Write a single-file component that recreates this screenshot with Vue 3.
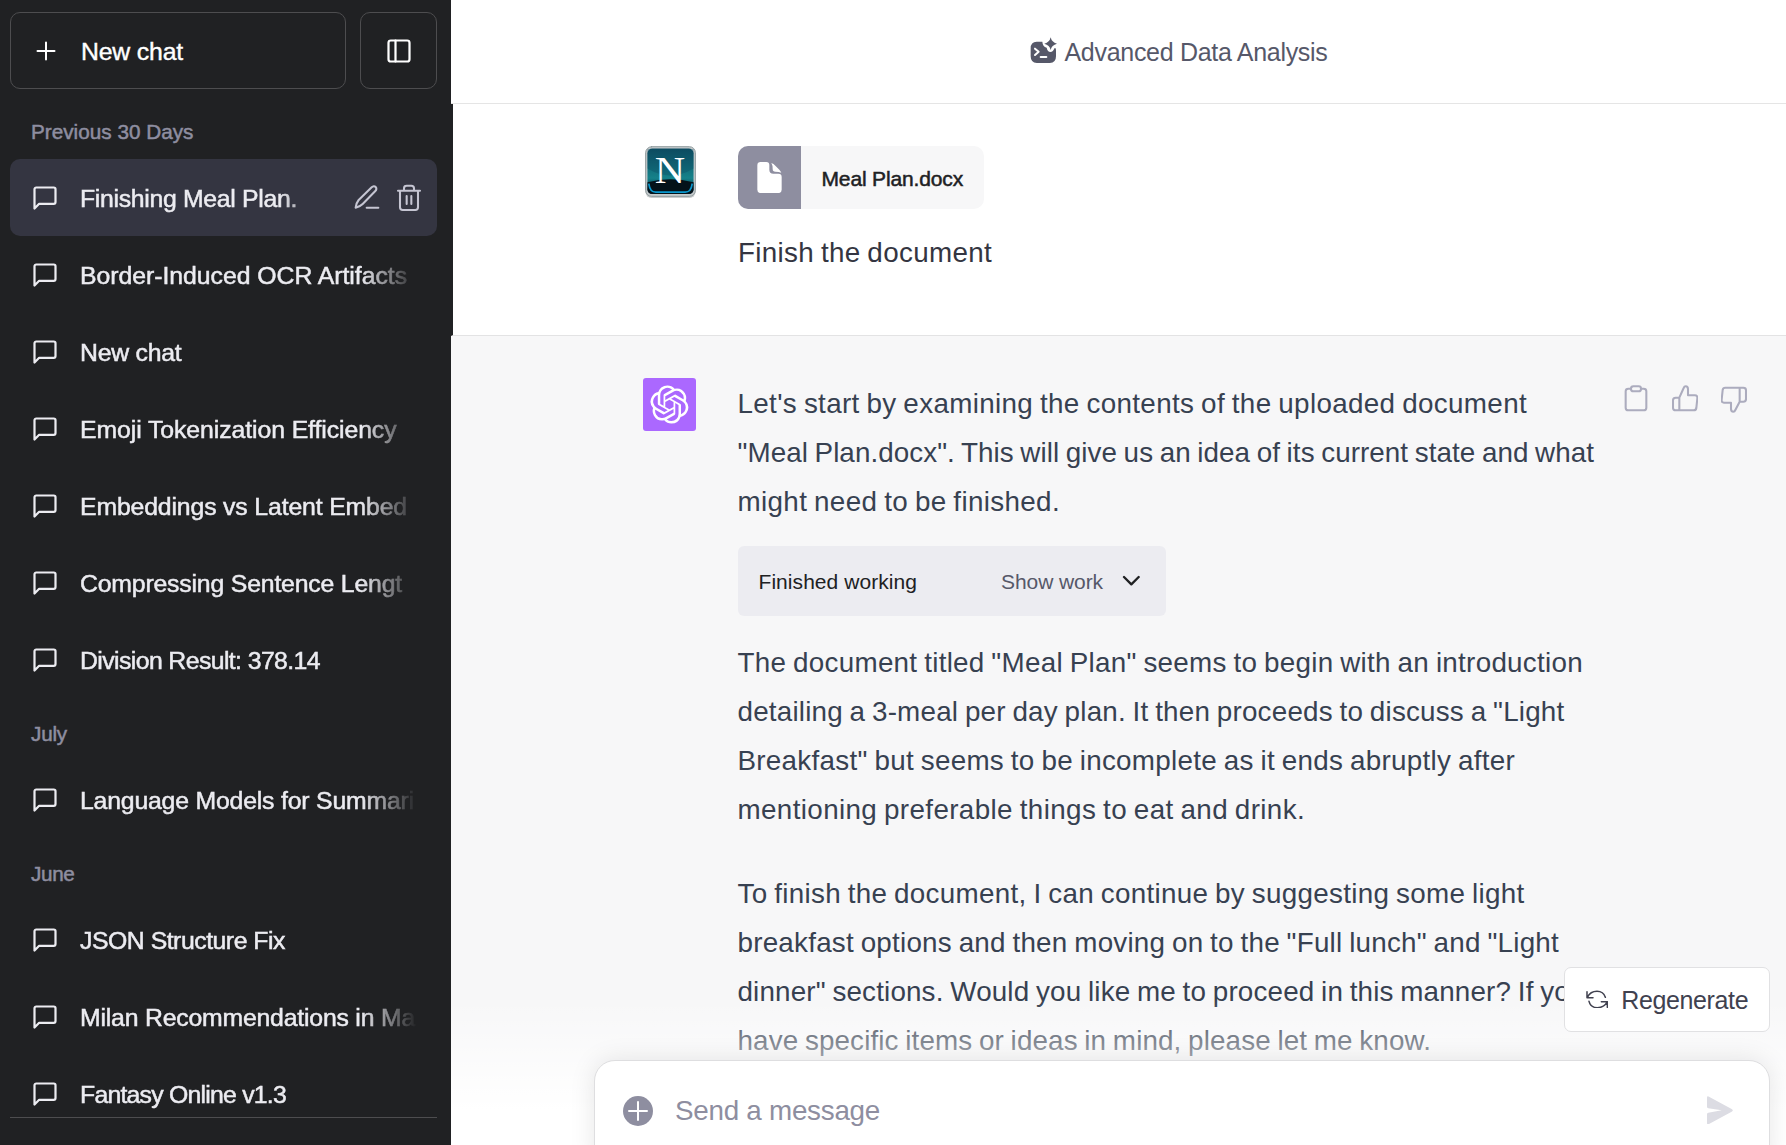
<script setup>
// Tracks a line of text so that it spans the given measure in pixels.
const vFit = {
  mounted(el, { value }) {
    const natural = el.getBoundingClientRect().width
    const count = el.textContent.length
    el.style.letterSpacing = `${((value - natural) / count).toFixed(3)}px`
  },
}

const groups = [
  {
    label: 'Previous 30 Days',
    measure: 162.5,
    chats: [
      { title: 'Finishing Meal Plan.', measure: 217, active: true },
      { title: 'Border-Induced OCR Artifacts', measure: 327 },
      { title: 'New chat', measure: 101.5 },
      { title: 'Emoji Tokenization Efficiency', measure: 316.5 },
      { title: 'Embeddings vs Latent Embed', measure: 327 },
      { title: 'Compressing Sentence Lengt', measure: 322 },
      { title: 'Division Result: 378.14', measure: 240 },
    ],
  },
  {
    label: 'July',
    measure: 36,
    chats: [{ title: 'Language Models for Summari', measure: 334 }],
  },
  {
    label: 'June',
    measure: 43.5,
    chats: [
      { title: 'JSON Structure Fix', measure: 205 },
      { title: 'Milan Recommendations in Ma', measure: 335 },
      { title: 'Fantasy Online v1.3', measure: 206 },
    ],
  },
]

const intro = [
  ["Let's start by examining the contents of the uploaded document", 789.5],
  ['"Meal Plan.docx". This will give us an idea of its current state and what', 856.5],
  ['might need to be finished.', 322.5],
]
const paragraphs = [
  [
    ['The document titled "Meal Plan" seems to begin with an introduction', 845.5],
    ['detailing a 3-meal per day plan. It then proceeds to discuss a "Light', 827],
    ['Breakfast" but seems to be incomplete as it ends abruptly after', 777.5],
    ['mentioning preferable things to eat and drink.', 567.5],
  ],
  [
    ['To finish the document, I can continue by suggesting some light', 787],
    ['breakfast options and then moving on to the "Full lunch" and "Light', 821.5],
    ['dinner" sections. Would you like me to proceed in this manner? If you', 848],
    ['have specific items or ideas in mind, please let me know.', 693.5],
  ],
]
</script>

<template>
  <div class="app">
    <aside class="sidebar">
      <div class="top">
        <button class="new-chat">
          <svg class="plus" viewBox="0 0 24 24"><path d="M12 3.500v17M3.500 12h17" /></svg>
          <span v-fit="102">New chat</span>
        </button>
        <button class="toggle">
          <svg viewBox="0 0 24 24"><rect x="3" y="3" width="18" height="18" rx="2" /><path d="M9 3v18" /></svg>
        </button>
      </div>
      <nav class="history">
        <section v-for="group in groups" :key="group.label">
          <h3><span v-fit="group.measure">{{ group.label }}</span></h3>
          <div v-for="chat in group.chats" :key="chat.title" class="chat" :class="{ active: chat.active }">
            <svg class="bubble" viewBox="0 0 24 24">
              <path d="M21 15.500a1.500 1.500 0 0 1-1.500 1.500H7l-4 4V4.500A1.500 1.500 0 0 1 4.500 3h15A1.500 1.500 0 0 1 21 4.500z" />
            </svg>
            <div class="title"><span v-fit="chat.measure">{{ chat.title }}</span></div>
            <div v-if="chat.active" class="tools">
              <svg viewBox="0 0 78 84">
                <path d="M5 71c1-9 4-17 9-23L53 10c4-4 9-4 12-1s3 8-1 12L26 60c-6 6-13 9-21 11zM38 71h35" />
              </svg>
              <svg viewBox="0 0 78 84">
                <path d="M6 20h66M12 20v50q0 8 8 8h38q8 0 8-8V20M24 19v-6q0-8 8-8h14q8 0 8 8v6M32 36v24M46 36v24" />
              </svg>
            </div>
          </div>
        </section>
      </nav>
      <div class="footer-rule"></div>
    </aside>

    <main>
      <header>
        <svg class="model-icon" viewBox="150 52 84 80">
          <path class="solid" d="M170 66h17q1 15 13 18 3 13 11 13 9 0 12-11h4q1 4 1 8v16q0 20-20 20h-36q-20 0-20-20V86q0-20 18-20z" />
          <path class="solid" d="M212 53q3 15 19 19-16 4-19 19-3-15-19-19 16-4 19-19z" />
          <path class="prompt" d="M165 87l11 9-11 10M182 112h17" />
        </svg>
        <span v-fit="263">Advanced Data Analysis</span>
      </header>

      <section class="message user">
        <svg class="avatar netscape" viewBox="0 0 52 53">
          <defs>
            <linearGradient id="sky" x1="0" y1="0" x2="0" y2="1">
              <stop offset="0" stop-color="#0d4c61" />
              <stop offset=".65" stop-color="#15828a" />
              <stop offset="1" stop-color="#001a35" />
            </linearGradient>
          </defs>
          <rect x=".5" y="2" width="51" height="51" rx="6" fill="#c9cccd" />
          <rect x=".7" y=".7" width="50.600" height="50.600" rx="6" fill="#c6cbcd" stroke="#8d999b" stroke-width="1" />
          <rect x="2.500" y="2.500" width="47" height="46.500" rx="5" fill="url(#sky)" />
          <path d="M2.500 3h47v20Q26 37 2.500 23z" fill="#0b4b62" opacity=".35" />
          <path d="M2.500 37Q26 31 49.500 37v7q0 5-6 5h-35q-6 0-6-5z" fill="#041219" />
          <path d="M4 39q1 8 7 8h30q6 0 7-8" fill="none" stroke="#0798cf" stroke-width="1.800" />
          <text x="25.500" y="38" text-anchor="middle" textLength="31" lengthAdjust="spacingAndGlyphs">N</text>
        </svg>
        <div class="content">
          <div class="file">
            <div class="file-icon">
              <svg viewBox="0 0 75 94">
                <path d="M11 0h17q9 0 9 9v14q0 12 12 12h15q10 0 10 10v38q0 10-10 10H11Q1 93 1 83V10Q1 0 11 0z" />
                <path d="M43 3q7 2 12 8l12 12q4 4 6 9-7-3-18-3-8 0-8-8 0-12-4-18z" />
              </svg>
            </div>
            <div class="file-name"><span v-fit="141.5">Meal Plan.docx</span></div>
          </div>
          <p class="line prompt-text"><span v-fit="254">Finish the document</span></p>
        </div>
      </section>

      <section class="message assistant">
        <div class="avatar gpt">
          <svg viewBox="0 0 41 41">
            <path d="M37.532 16.870a9.963 9.963 0 0 0-.856-8.184 10.078 10.078 0 0 0-10.855-4.835A9.964 9.964 0 0 0 18.306.500a10.079 10.079 0 0 0-9.614 6.977 9.967 9.967 0 0 0-6.664 4.834 10.080 10.080 0 0 0 1.240 11.817 9.965 9.965 0 0 0 .856 8.185 10.079 10.079 0 0 0 10.855 4.835 9.965 9.965 0 0 0 7.516 3.350 10.078 10.078 0 0 0 9.617-6.981 9.967 9.967 0 0 0 6.663-4.834 10.079 10.079 0 0 0-1.243-11.813ZM22.498 37.886a7.474 7.474 0 0 1-4.799-1.735c.061-.033.168-.091.237-.134l7.964-4.600a1.294 1.294 0 0 0 .655-1.134V19.054l3.366 1.944a.120.120 0 0 1 .066.092v9.299a7.505 7.505 0 0 1-7.490 7.496ZM6.392 31.006a7.471 7.471 0 0 1-.894-5.023c.060.036.162.099.237.141l7.964 4.600a1.297 1.297 0 0 0 1.308 0l9.724-5.614v3.888a.120.120 0 0 1-.048.103l-8.051 4.649a7.504 7.504 0 0 1-10.240-2.744ZM4.297 13.620A7.469 7.469 0 0 1 8.200 10.333c0 .068-.004.190-.004.274v9.201a1.294 1.294 0 0 0 .654 1.132l9.723 5.614-3.366 1.944a.120.120 0 0 1-.114.010L7.040 23.856a7.504 7.504 0 0 1-2.743-10.237Zm27.658 6.437-9.724-5.615 3.367-1.943a.121.121 0 0 1 .113-.010l8.052 4.648a7.498 7.498 0 0 1-1.158 13.528v-9.476a1.293 1.293 0 0 0-.650-1.132Zm3.350-5.043c-.059-.037-.162-.099-.236-.141l-7.965-4.600a1.298 1.298 0 0 0-1.308 0l-9.723 5.614v-3.888a.120.120 0 0 1 .048-.103l8.050-4.645a7.497 7.497 0 0 1 11.135 7.763Zm-21.063 6.929-3.367-1.944a.120.120 0 0 1-.065-.092v-9.299a7.497 7.497 0 0 1 12.293-5.756 6.940 6.940 0 0 0-.236.134l-7.965 4.600a1.294 1.294 0 0 0-.654 1.132l-.006 11.225Zm1.829-3.943 4.330-2.501 4.332 2.500v5l-4.331 2.500-4.331-2.500V18Z" />
          </svg>
        </div>
        <div class="content">
          <p class="intro"><span v-for="[text, measure] in intro" :key="text" class="line"><span v-fit="measure">{{ text }}</span></span></p>
          <div class="work">
            <span v-fit="158.5" class="work-state">Finished working</span>
            <span v-fit="102" class="work-show">Show work</span>
            <svg viewBox="0 0 56 36"><path d="M6 6l22 22L50 6" /></svg>
          </div>
          <p v-for="(lines, i) in paragraphs" :key="i">
            <span v-for="[text, measure] in lines" :key="text" class="line"><span v-fit="measure">{{ text }}</span></span>
          </p>
        </div>
        <div class="feedback">
          <svg viewBox="0 0 78 84">
            <path d="M24 11h-8Q8 11 8 19v49q0 8 8 8h46q8 0 8-8V19q0-8-8-8h-8" />
            <rect x="24" y="4" width="30" height="15" rx="7" />
          </svg>
          <svg viewBox="0 0 78 84">
            <path d="M22 76h43q7 0 8-7l3-29q1-9-7-9H48V13q0-9-7-9-4 0-6 5L22 38v38H11q-8 0-8-8V46q0-8 8-8h11" />
          </svg>
          <svg class="flipped" viewBox="0 0 78 84">
            <path d="M22 76h43q7 0 8-7l3-29q1-9-7-9H48V13q0-9-7-9-4 0-6 5L22 34v42H11q-8 0-8-8V42q0-8 8-8h11" />
          </svg>
        </div>
      </section>

      <div class="fade"></div>
      <button class="regenerate">
        <svg viewBox="256 210 68 56">
          <path d="M259 215v18h18M260 232q9-18 29-18 19 0 25 18M265 244q5 19 25 19 21 0 30-18M302 245h18v17" />
        </svg>
        <span v-fit="127">Regenerate</span>
      </button>
      <div class="composer">
        <svg class="attach" viewBox="0 0 30 30"><circle cx="15" cy="15" r="15" /><path d="M15 6v18M6 15h18" /></svg>
        <span v-fit="205" class="placeholder">Send a message</span>
        <svg class="send" viewBox="0 0 78 86">
          <path d="M0 5Q0-1 6 2l68 37q7 4 0 8L6 84q-6 3-6-3V54q0-3 4-4l40-7L4 37q-4-1-4-4z" />
        </svg>
      </div>
    </main>
  </div>
</template>

<style>
body {
  margin: 0;
  overflow: hidden;
}
</style>

<style scoped>
* {
  box-sizing: border-box;
}
.app {
  display: flex;
  width: 1786px;
  height: 1145px;
  overflow: hidden;
  background: #fff;
  font-family: 'Liberation Sans', Arial, sans-serif;
}
span {
  white-space: nowrap;
}
svg {
  flex: none;
  fill: none;
  stroke: currentColor;
  stroke-linecap: round;
  stroke-linejoin: round;
}
p,
h3 {
  margin: 0;
  font-weight: 400;
}
button {
  display: flex;
  align-items: center;
  padding: 0;
  font: inherit;
}

.sidebar {
  display: flex;
  flex: none;
  flex-direction: column;
  width: 451px;
  height: 1145px;
  padding: 12px 14px 0 10px;
  background: #202123;
  color: #ececf1;
  font-size: 24.8px;
}
.top {
  display: flex;
  gap: 14px;
  height: 77px;
  margin-bottom: 7px;
}
.top button {
  border: 1px solid #4d4d4f;
  border-radius: 10px;
  background: transparent;
  color: #fff;
  -webkit-text-stroke: 0.4px;
}
.new-chat {
  width: 336px;
  padding-left: 23px;
  gap: 24px;
}
.new-chat span {
  padding-top: 2px;
}
.toggle {
  justify-content: center;
  width: 77px;
}
.top svg {
  width: 26px;
  height: 26px;
  stroke-width: 2;
}
.top .plus {
  width: 24px;
  height: 24px;
  margin-right: -1px;
}
.toggle svg {
  width: 28px;
  height: 28px;
  stroke-width: 1.9;
}
.history {
  height: 1021px;
  overflow: hidden;
}
h3 {
  height: 63px;
  padding-left: 21px;
  color: #8e8ea0;
  font-size: 20.7px;
  line-height: 72px;
  -webkit-text-stroke: 0.5px;
}
.chat {
  display: flex;
  align-items: center;
  height: 77px;
  padding-left: 21px;
  border-radius: 10px;
  -webkit-text-stroke: 0.5px;
}
.chat.active {
  background: #343541;
}
.bubble {
  width: 28px;
  height: 28px;
  stroke-width: 1.9;
}
.title {
  flex: none;
  width: 337px;
  margin-left: 21px;
  padding-top: 2px;
  overflow: hidden;
  line-height: 34px;
  mask-image: linear-gradient(to right, #000 281px, transparent 337px);
}
.active .title {
  width: 246px;
  mask-image: linear-gradient(to right, #000 200px, transparent 250px);
}
.tools {
  display: flex;
  gap: 16px;
  margin-left: 28px;
  color: #c5c5d2;
}
.tools svg {
  width: 26px;
  height: 28px;
  stroke-width: 6.2;
}
.footer-rule {
  height: 1px;
  background: #4d4d4f;
}

main {
  position: relative;
  display: flex;
  flex: 1;
  flex-direction: column;
}
header {
  display: flex;
  flex: none;
  align-items: center;
  height: 104px;
  padding-left: 579px;
  gap: 6.5px;
  border-bottom: 1px solid #e5e5e5;
  color: #565869;
  font-size: 25px;
}
header span {
  margin-top: 1px;
}
.model-icon {
  width: 28px;
  height: 26.7px;
  margin-top: -3px;
}
.solid {
  fill: currentColor;
  stroke: none;
}
.prompt {
  stroke: #fff;
  stroke-width: 6;
}
.message {
  display: flex;
  flex: none;
  color: #374151;
  font-size: 27.8px;
  word-spacing: -1.2px;
}
.user {
  height: 232px;
  padding: 42px 0 0 192px;
  border-left: 2px solid #202123;
  border-bottom: 1px solid #e3e3e4;
  color: #343541;
}
.netscape {
  width: 51px;
  height: 52px;
  margin-right: 1px;
  stroke: none;
}
.netscape text {
  fill: #fff;
  font: 38px 'Liberation Serif', serif;
}
.user .content {
  margin-left: 41px;
}
.file {
  display: flex;
  width: 246px;
  height: 63px;
  overflow: hidden;
  border-radius: 10px;
  background: #f7f7f8;
}
.file-icon {
  display: flex;
  align-items: center;
  justify-content: center;
  width: 63px;
  background: #8e8ea0;
}
.file-icon svg {
  width: 25px;
  height: 31.5px;
  fill: #fff;
  stroke: none;
}
.file-name {
  padding-left: 20.5px;
  color: #202123;
  font-size: 21px;
  line-height: 65px;
  word-spacing: 0;
  -webkit-text-stroke: 0.5px;
}
.line {
  display: block;
  height: 49px;
  line-height: 49px;
}
.prompt-text {
  margin-top: 19px;
}
.assistant {
  height: 809px;
  padding: 42px 0 0 192px;
  background: #f7f7f8;
}
.gpt {
  display: flex;
  flex: none;
  align-items: center;
  justify-content: center;
  width: 53px;
  height: 53px;
  border-radius: 3px;
  background: #ab68ff;
  color: #fff;
}
.gpt svg {
  width: 39px;
  height: 39px;
  fill: currentColor;
  stroke: none;
}
.assistant .content {
  width: 885px;
  margin-left: 41.5px;
}
.intro {
  padding-top: 1px;
}
.work {
  display: flex;
  align-items: center;
  width: 428px;
  height: 70px;
  margin: 20px 0 22px 0.5px;
  padding: 2px 0 0 20.5px;
  border-radius: 6px;
  background: #ececf1;
  color: #202123;
  font-size: 21px;
  word-spacing: 0;
}
.work-show {
  margin-left: 84px;
  color: #565869;
}
.work svg {
  width: 18.7px;
  height: 12px;
  margin: -2px 0 0 18.5px;
  stroke-width: 7;
}
p + p {
  margin-top: 35px;
}
.feedback {
  display: flex;
  gap: 23px;
  height: 28px;
  margin: 7px 0 0;
  color: #acacbe;
}
.feedback svg {
  width: 26px;
  height: 28px;
  stroke-width: 6.2;
}
.flipped {
  transform: rotate(180deg);
}

.fade {
  position: absolute;
  inset: 1000px 0 0 0;
  background: linear-gradient(to bottom, rgba(255, 255, 255, 0), #fff 110px);
}
.regenerate {
  position: absolute;
  top: 967px;
  right: 16px;
  width: 206px;
  height: 65px;
  padding: 1px 0 0 20.5px;
  gap: 13px;
  border: 1px solid #e1e1e3;
  border-radius: 7px;
  background: #fff;
  color: #40414f;
  font-size: 25px;
}
.regenerate svg {
  width: 22.7px;
  height: 18.7px;
  margin-top: -2px;
  stroke-width: 4.5;
}
.composer {
  position: absolute;
  top: 1060px;
  right: 16px;
  display: flex;
  align-items: center;
  width: 1176px;
  height: 110px;
  padding: 0 0 8px 28px;
  border: 1px solid #dedee0;
  border-radius: 21px;
  background: #fff;
  box-shadow: 0 0 26px rgba(0, 0, 0, 0.1);
  font-size: 27.8px;
}
.attach {
  width: 30px;
  height: 30px;
}
.attach circle {
  fill: #8e8ea0;
  stroke: none;
}
.attach path {
  stroke: #fff;
  stroke-width: 2;
}
.placeholder {
  margin-left: 22px;
  color: #8e8ea0;
}
.send {
  width: 26px;
  height: 28.7px;
  margin: -2px 36px 0 auto;
  fill: #dcdce3;
  stroke: none;
}
</style>
